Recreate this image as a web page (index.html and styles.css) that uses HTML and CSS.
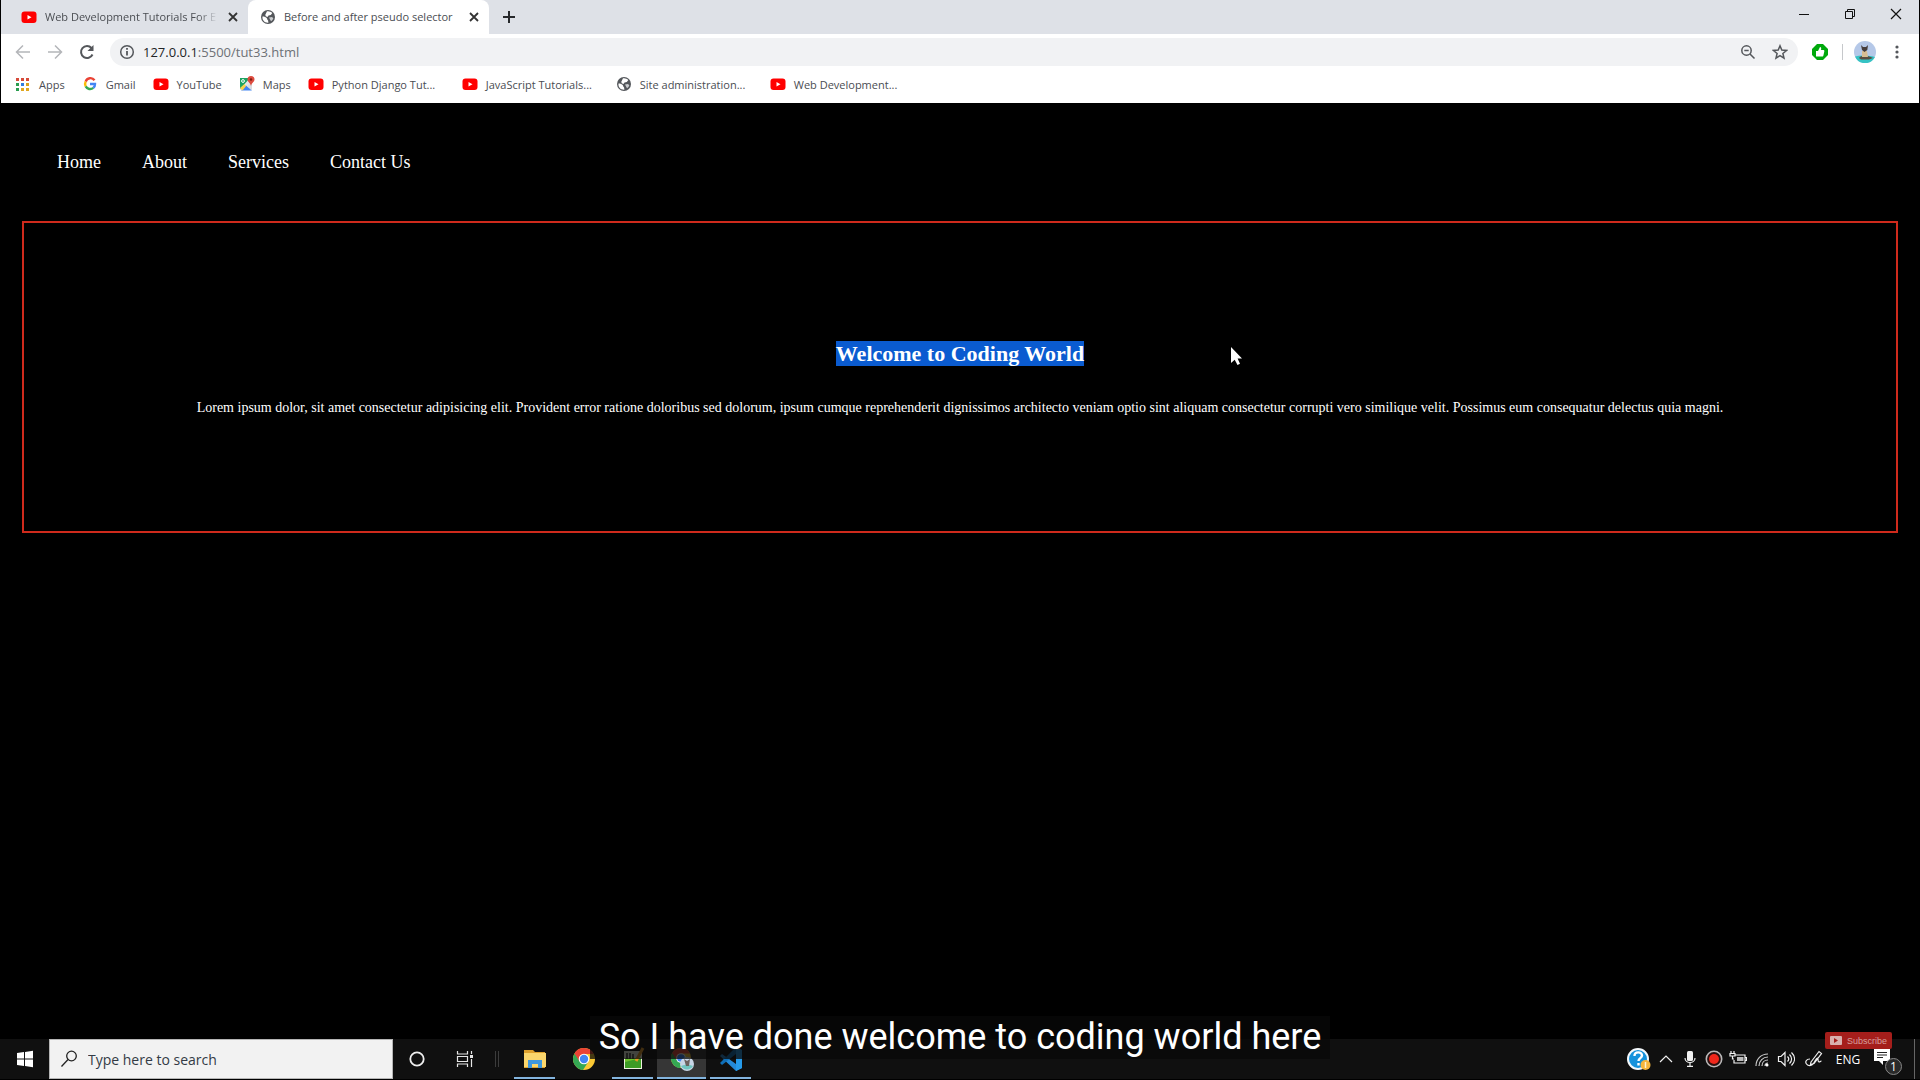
FILE: index.html
```html
<!DOCTYPE html>
<html lang="en">
<head>
<meta charset="utf-8">
<title>Before and after pseudo selector</title>
<link rel="stylesheet" href="styles.css">
</head>
<body>
<svg class="sprite" aria-hidden="true">
  <symbol id="youtube" viewBox="0 0 16 16"><rect x="0.500" y="2.500" width="15" height="11.500" rx="3" fill="#f00"/><path d="M6.500 6v4.500l4-2.250z" fill="#fff"/></symbol>
  <symbol id="globe" viewBox="0 0 16 16"><circle cx="8" cy="8" r="7" fill="#54575b"/><path d="M2.500 7.500c2 0 3.500.5 4.200 1.600.8 1 .2 1.800 1.400 2.300l.3 2.300C4.500 14 2 11 2.500 7.500zM7 2.300c2-.4 4 .4 5.300 1.700l-1.500 2-2.300.5-1 1.500-1.800-.8-.4-1.500z" fill="#fff"/><path d="M9 8.500l3-.5 1.300 1.300c-.4 1.200-1.300 2.300-2.300 3z" fill="#c9cbce"/></symbol>
  <symbol id="cross" viewBox="0 0 10 10"><path d="M1 1l8 8M9 1l-8 8" fill="none" stroke="currentColor" stroke-width="1.800"/></symbol>
  <symbol id="chrome" viewBox="0 0 24 24"><circle cx="12" cy="12" r="11" fill="#fcc934"/><path d="M12 12L2.500 6.500A11 11 0 0 0 11 23l5.500-8.500z" fill="#34a853"/><path d="M2.500 6.500A11 11 0 0 1 21.700 7H12l-4.500 7.500z" fill="#ea4335"/><circle cx="12" cy="12" r="5.300" fill="#fff"/><circle cx="12" cy="12" r="4.200" fill="#4285f4"/></symbol>
</svg>

<header class="browser">
  <div class="tabs">
    <div class="tab">
      <svg class="icon16"><use href="#youtube"/></svg>
      <span class="tab-title faded">Web Development Tutorials For E</span>
      <button class="tab-close" aria-label="Close tab"><svg class="icon10"><use href="#cross"/></svg></button>
    </div>
    <div class="tab active">
      <svg class="icon16"><use href="#globe"/></svg>
      <span class="tab-title">Before and after pseudo selector</span>
      <button class="tab-close" aria-label="Close tab"><svg class="icon10"><use href="#cross"/></svg></button>
    </div>
    <button class="new-tab" aria-label="New tab"><svg width="12" height="12" viewBox="0 0 12 12"><path d="M6 0v12M0 6h12" stroke="#27292c" stroke-width="2"/></svg></button>
    <div class="window-buttons">
      <button aria-label="Minimise"><svg width="12" height="12" viewBox="0 0 12 12"><path d="M1 6.500h10" stroke="#111"/></svg></button>
      <button aria-label="Restore"><svg width="12" height="12" viewBox="0 0 12 12" fill="none" stroke="#111"><path d="M1.500 3.500h7v7h-7zM3.500 3.500v-2h7v7h-2"/></svg></button>
      <button aria-label="Close"><svg width="12" height="12" viewBox="0 0 12 12"><path d="M1 1l10 10M11 1L1 11" stroke="#111" stroke-width="1.200"/></svg></button>
    </div>
  </div>

  <div class="toolbar">
    <button class="tool dim" aria-label="Back"><svg class="icon16" viewBox="0 0 16 16"><path d="M15 8H2M8 1.500L1.500 8 8 14.500"/></svg></button>
    <button class="tool dim" aria-label="Forward"><svg class="icon16" viewBox="0 0 16 16"><path d="M1 8h13M8 1.500L14.500 8 8 14.500"/></svg></button>
    <button class="tool" aria-label="Reload"><svg class="icon16" viewBox="0 0 16 16"><path d="M13.500 10.500A6 6 0 1 1 12.500 4l1 1.200" stroke-width="2"/><path d="M14.500 1v6h-6z" fill="#54575b" stroke="none"/></svg></button>
    <form class="address">
      <svg class="icon16 line" viewBox="0 0 16 16"><circle cx="8" cy="8" r="6.300"/><path d="M8 7v4.500M8 4v1.800" stroke-width="1.800"/></svg>
      <label class="url"><span class="host">127.0.0.1</span>:5500/tut33.html<input aria-label="Address" class="url-input"></label>
      <button type="button" class="tool" aria-label="Zoom"><svg class="icon16" viewBox="0 0 16 16"><circle cx="6.500" cy="6.500" r="4.700"/><path d="M4.300 6.500h4.400M10 10l4.500 4.500"/></svg></button>
      <button type="button" class="tool" aria-label="Bookmark"><svg class="icon16" viewBox="0 0 16 16"><path d="M8 1.800l1.800 4.300 4.700.4-3.600 3 1.100 4.600-4-2.500-4 2.500 1.100-4.600-3.600-3 4.700-.4z"/></svg></button>
    </form>
    <button class="tool extension" aria-label="Extension"><svg class="icon16" viewBox="0 0 16 16"><path d="M5 0h6l5 5v6l-5 5H5l-5-5V5z" fill="#00a90c" stroke="none"/><path d="M4 7h2l2-4c1.200 0 1.500 1 1 3h2.500c1 0 1 1 .7 2l-.7 3c-.2 1-.5 1.500-1.500 1.500H4z" fill="#fff" stroke="none"/></svg></button>
    <span class="divider"></span>
    <button class="tool profile" aria-label="Profile"><svg class="icon22" viewBox="0 0 22 22"><g stroke="none"><circle cx="11" cy="11" r="11" fill="#b5c8e8"/><path d="M1 15.500c6-1.500 14-1 20 .5a11 11 0 0 1-20-.5z" fill="#35c3c4"/><path d="M5 17c2-3 8-3 14 0l-4 1.500H7z" fill="#5b4c40"/><path d="M8 10h5l1 6H8z" fill="#d8bd93"/><path d="M7 4l2 2h3l2-2-.7 5-2.800 2L8 9z" fill="#463d3b"/></g></svg></button>
    <button class="tool menu" aria-label="Menu"><svg class="icon16" viewBox="0 0 16 16"><g fill="#54575b" stroke="none"><circle cx="8" cy="3" r="1.600"/><circle cx="8" cy="8" r="1.600"/><circle cx="8" cy="13" r="1.600"/></g></svg></button>
  </div>

  <nav class="bookmarks" aria-label="Bookmarks">
    <a href="#"><svg class="icon16" viewBox="0 0 16 16"><path d="M1 2h3v3H1zM6 2h3v3H6zM11 2h3v3h-3z" fill="#d64a3a"/><path d="M1 7h3v3H1z" fill="#2a9d50"/><path d="M6 7h3v3H6z" fill="#2f7de1"/><path d="M11 7h3v3h-3z" fill="#d8a01d"/><path d="M1 12h3v3H1z" fill="#2a9d50"/><path d="M6 12h3v3H6zM11 12h3v3h-3z" fill="#e0a71f"/></svg>Apps</a>
    <a href="#"><svg class="icon16" viewBox="0 0 16 16" fill="none" stroke-width="2.400"><path d="M12.500 4.200A5 5 0 0 0 3.700 5.600" stroke="#ea4335"/><path d="M3.700 5.600a5 5 0 0 0 0 4.800" stroke="#fbbc05"/><path d="M3.700 10.400a5 5 0 0 0 7.600 1.500" stroke="#34a853"/><path d="M11.300 11.900A5 5 0 0 0 13 8H8" stroke="#4285f4"/></svg>Gmail</a>
    <a href="#"><svg class="icon16"><use href="#youtube"/></svg>YouTube</a>
    <a href="#"><svg class="icon16" viewBox="0 0 16 16"><path d="M1 2h12v12H1z" fill="#e4e6e8"/><path d="M1 2h10L1 13z" fill="#1da462"/><path d="M2 14.500l5-5 6 5z" fill="#4285f4"/><path d="M1 12l2.500 2.500L7 10 5.500 8z" fill="#fbd14b"/><path d="M8 10l5 4.500V6z" fill="#dadce0"/><path d="M12 0a3.500 3.500 0 0 1 3.500 3.500C15.500 6 12.500 7 12 10c-.5-3-3.500-4-3.500-6.500A3.500 3.500 0 0 1 12 0z" fill="#dd4b3e"/><circle cx="12" cy="3.500" r="1.200" fill="#7d1c14"/><circle cx="4" cy="5" r="1.400" fill="none" stroke="#fff"/></svg>Maps</a>
    <a class="long" href="#"><svg class="icon16"><use href="#youtube"/></svg>Python Django Tut...</a>
    <a class="long" href="#"><svg class="icon16"><use href="#youtube"/></svg>JavaScript Tutorials...</a>
    <a class="long" href="#"><svg class="icon16"><use href="#globe"/></svg>Site administration...</a>
    <a class="long" href="#"><svg class="icon16"><use href="#youtube"/></svg>Web Development...</a>
  </nav>
</header>

<main class="page">
  <nav class="site-nav">
    <a href="#">Home</a>
    <a href="#">About</a>
    <a href="#">Services</a>
    <a href="#">Contact Us</a>
  </nav>
  <section class="welcome">
    <h1><span class="selected">Welcome to Coding World</span></h1>
    <p>Lorem ipsum dolor, sit amet consectetur adipisicing elit. Provident error ratione doloribus sed dolorum, ipsum cumque reprehenderit dignissimos architecto veniam optio sint aliquam consectetur corrupti vero similique velit. Possimus eum consequatur delectus quia magni.</p>
    <svg class="cursor" width="14" height="20" viewBox="0 0 14 20" aria-hidden="true"><path d="M1 0v16l3.700-3.300L7.500 18l2.500-1.200L7.600 11.500H12z" fill="#fff"/></svg>
  </section>
</main>

<footer class="taskbar">
  <button class="start" aria-label="Start"><svg width="18" height="18" viewBox="0 0 18 18"><path d="M1 3l7-1v6.500H1zM9 1.900L17 .8v7.700H9zM1 9.500h7V16l-7-1zM9 9.500h8v7.700l-8-1.100z" fill="#fff"/></svg></button>
  <label class="search">
    <svg class="icon18" viewBox="0 0 18 18" fill="none" stroke="#222" stroke-width="1.300"><circle cx="11.500" cy="6" r="4.800"/><path d="M8 9.500L1.500 16.500"/></svg>
    <input type="text" placeholder="Type here to search" aria-label="Search">
  </label>
  <button class="task" aria-label="Cortana"><svg width="18" height="18" viewBox="0 0 18 18"><circle cx="9" cy="9" r="6.700" fill="none" stroke="#eee" stroke-width="1.800"/></svg></button>
  <button class="task" aria-label="Task view"><svg width="18" height="18" viewBox="0 0 18 18" fill="none" stroke="#e6e6e6" stroke-width="1.200"><path d="M1.500 1v3h10V1M1.500 17v-3h10v3M1.500 6.500h10v5h-10zM15.500 1v3M15.500 9v8"/><path d="M14 5h3v3h-3z" fill="#e6e6e6" stroke="none"/></svg></button>
  <span class="grip"></span>
  <button class="app open" aria-label="File Explorer"><svg width="24" height="24" viewBox="0 0 24 24"><path d="M1 3h9l2 2h10v16H1z" fill="#dfa12c"/><path d="M1 6h22v14H1z" fill="#fbd66c"/><path d="M5 13h14v8h-4v-4H9v4H5z" fill="#3f97dd"/></svg></button>
  <button class="app" aria-label="Chrome"><svg width="24" height="24"><use href="#chrome"/></svg></button>
  <button class="app open" aria-label="Text editor"><svg width="24" height="24" viewBox="0 0 24 24"><path d="M3 4h18v18H3z" fill="#eef1df"/><path d="M4 11h16v10H4z" fill="#6fc22f"/><path d="M4 15l16-4v10H4z" fill="#3d9c24"/><path d="M6 6v6M9 6v6M12 7v5" stroke="#333" stroke-width="1.500"/><path d="M22 1l-7 13" stroke="#e89a24" stroke-width="3"/></svg></button>
  <button class="app current" aria-label="Chrome, second window"><svg width="24" height="24" viewBox="0 0 24 24"><use href="#chrome" width="22" height="22"/><circle cx="17" cy="17" r="7" fill="#c8d6e6"/><path d="M11 19c4-2 8-2 12 0a7 7 0 0 1-12 0z" fill="#70c6c0"/><path d="M14 12l3 2 3-2-1 7h-3z" fill="#6c625e"/></svg></button>
  <button class="app open" aria-label="Visual Studio Code"><svg width="24" height="24" viewBox="0 0 24 24"><path d="M17 0l6 3v18l-6 3L1 9l2-2 14 10z" fill="#2489d8"/><path d="M17 0v7L3 18l-2-2z" fill="#0f6fb8"/><path d="M17 0l6 3v18l-6 3z" fill="#269bea"/></svg></button>

  <div class="tray">
    <button class="slot help" aria-label="Help"><svg width="24" height="24" viewBox="0 0 24 24"><circle cx="11" cy="12" r="10" fill="#1592dc" stroke="#f4f8fb" stroke-width="2"/><path d="M7.500 9c0-5 7.500-4.500 7.500-.5 0 2.700-3.500 2.500-3.500 5.500M11.500 16v2.500" fill="none" stroke="#fff" stroke-width="2.400"/><circle cx="18.500" cy="18" r="5" fill="#f6b63c"/><path d="M18.500 15v6" stroke="#fff3cf" stroke-width="1.500"/></svg></button>
    <button class="slot" aria-label="Show hidden icons"><svg class="icon16" viewBox="0 0 16 16"><path d="M2 11l6-6 6 6"/></svg></button>
    <button class="slot" aria-label="Microphone"><svg class="icon16" viewBox="0 0 16 16"><rect x="5" y="0" width="6" height="10" rx="1.500" fill="#f1f1f1" stroke="none"/><path d="M3 7c0 6 10 6 10 0M8 12v3M5 15.300h6"/></svg></button>
    <button class="slot" aria-label="Recorder"><svg class="icon18" viewBox="0 0 18 18"><circle cx="9" cy="9" r="7.700" fill="#2b1010" stroke="#b9b9b9" stroke-width="1.600"/><circle cx="9" cy="9" r="5" fill="#f0271b" stroke="none"/></svg></button>
    <button class="slot" aria-label="Battery"><svg class="icon18" viewBox="0 0 18 18"><path d="M6 5h10v8H5v-3M16 7.500h1.500v3H16M2 1v2M5 1v2M1 3.500h5v2.500H1zM3.500 6v3H5"/><path d="M8 7h6.500v4H8z" fill="#bbb" stroke="none"/></svg></button>
    <button class="slot" aria-label="Network"><svg class="icon16" viewBox="0 0 16 16"><path d="M2 15C2 8 7 3 14 3M5 15c0-5 4-9 9-9M8 15c0-3.500 2.500-6 6-6M11 15c0-2 1-3 3-3" stroke="#c8c8c8"/><circle cx="13" cy="14" r="1.500" fill="#fff" stroke="none"/></svg></button>
    <button class="slot" aria-label="Volume"><svg class="icon18" viewBox="0 0 18 18"><path d="M1.500 6.500h2.500L8 2.500v13L4 11.500H1.500zM10.500 6.500c1.500 1.500 1.500 3.500 0 5M12.500 4.500c2.800 2.700 2.800 6.300 0 9M14.500 2.500c4 4 4 9 0 13"/></svg></button>
    <button class="slot pen" aria-label="Ink workspace"><svg class="icon18" viewBox="0 0 18 18"><path d="M6 12L14 1.500l2.500 2L9 13.500l-3.500 1zM5 9C1 9 0 12 1.500 14s5 2.500 7-.5 3-6 4-5.500 0 4 1.500 4 1-1 2.500-1"/></svg></button>
    <button class="slot lang">ENG</button>
    <button class="slot notices" aria-label="Notifications"><svg width="26" height="26" viewBox="0 0 26 26"><path d="M1 3h16v12h-7v4l-4-4H1z" fill="#fff" stroke="none"/><path d="M4 6.500h10M4 9h10M4 11.500h6" stroke="#222"/></svg><span class="count">1</span></button>
    <span class="desktop-edge"></span>
  </div>

  <a class="subscribe" href="#"><svg width="12" height="9" viewBox="0 0 12 9"><rect width="12" height="9" rx="1" fill="#d8b0ae"/><path d="M4 2v5l4-2.500z" fill="#a51e1b"/></svg>Subscribe</a>
  <div class="caption-row"><p class="caption">So I have done welcome to coding world here</p></div>
</footer>
</body>
</html>
```
FILE: styles.css
```css
* {
  box-sizing: border-box;
}

body {
  margin: 0;
  min-height: 100vh;
  display: flex;
  flex-direction: column;
  background: #000;
  font-family: "Open Sans", "Noto Sans", sans-serif;
  font-size: 11px;
}

button {
  border: 0;
  padding: 0;
  background: none;
  font: inherit;
  color: inherit;
  display: flex;
  align-items: center;
  justify-content: center;
}

a {
  color: inherit;
  text-decoration: none;
}

svg {
  flex: none;
}

.sprite {
  position: absolute;
  width: 0;
  height: 0;
}

.icon10 { width: 10px; height: 10px; }
.icon16 { width: 16px; height: 16px; }
.icon18 { width: 18px; height: 18px; }
.icon22 { width: 22px; height: 22px; }

/* Browser window */
.browser {
  margin: 0 1px;
  background: #fff;
  color: #4a4d52;
}

.tabs {
  display: flex;
  height: 34px;
  background: #dee1e7;
}

.tab {
  display: flex;
  align-items: center;
  width: 247px;
  padding: 0 8px 1px 20px;
  gap: 8px;
}

.tab.active {
  width: 241px;
  padding-left: 12px;
  background: #fff;
  border-radius: 8px 8px 0 0;
}

.tab-title {
  flex: 1;
  white-space: nowrap;
}

.faded {
  mask-image: linear-gradient(to right, #000 88%, transparent);
}

.tab-close {
  width: 14px;
  height: 16px;
  color: #333;
}

.new-tab {
  width: 40px;
}

.window-buttons {
  display: flex;
  height: 28px;
  margin-left: auto;
}

.window-buttons button {
  width: 46px;
}

.toolbar {
  display: flex;
  align-items: center;
  height: 35px;
  padding: 0 6px;
}

.tool {
  width: 32px;
  height: 28px;
}

.tool svg,
.line {
  fill: none;
  stroke: #54575b;
  stroke-width: 1.5px;
}

.tool.dim svg {
  stroke: #b4b6b9;
}

.address {
  flex: 1;
  display: flex;
  align-items: center;
  height: 28px;
  margin-left: 7px;
  padding: 0 2px 0 9px;
  border-radius: 14px;
  background: #f1f2f4;
}

.url {
  flex: 1;
  display: flex;
  margin-left: 8px;
  font-size: 13px;
  color: #6d7176;
}

.host {
  color: #222427;
}

.url-input {
  flex: 1;
  border: 0;
  padding: 0;
  background: none;
}

.extension {
  margin-left: 6px;
}

.divider {
  width: 1px;
  height: 16px;
  margin: 0 6px;
  background: #c6c8cb;
}

.bookmarks {
  display: flex;
  align-items: center;
  height: 34px;
  padding: 0 14px 4px;
  gap: 17px;
}

.bookmarks a {
  display: flex;
  align-items: center;
  gap: 8px;
}

.bookmarks .long {
  min-width: 137px;
}

/* Page being shown */
.page {
  flex: 1;
  padding: 0 22px;
  color: #fff;
  font-family: "Liberation Serif", serif;
}

.site-nav {
  display: flex;
  gap: 41px;
  padding: 49px 35px 48px;
  font-size: 18px;
  line-height: 21px;
}

.welcome {
  position: relative;
  height: 312px;
  display: flex;
  flex-direction: column;
  justify-content: center;
  align-items: center;
  gap: 33px;
  padding-top: 3px;
  border: 2px solid #cf2a1c;
  text-align: center;
}

.welcome h1 {
  margin: 0;
  font-size: 22px;
  line-height: 25px;
}

.selected {
  background: #0a5bd0;
}

.welcome p {
  margin: 0;
  font-size: 14px;
  line-height: 18px;
}

.cursor {
  position: absolute;
  left: 1206px;
  top: 124px;
}

/* Taskbar */
.taskbar {
  position: relative;
  display: flex;
  height: 41px;
  padding: 0 1px;
  border-bottom: 1px solid #000;
  background: #101010;
  color: #fff;
}

.start,
.task {
  width: 48px;
}

.search {
  display: flex;
  align-items: center;
  width: 344px;
  padding-left: 10px;
  gap: 10px;
  border: 1px solid #b5b5b5;
  background: #f2f2f2;
}

.search input {
  flex: 1;
  border: 0;
  padding: 0;
  background: none;
  font: 14px "Open Sans", "Noto Sans", sans-serif;
}

.search input::placeholder {
  color: #333b45;
}

.grip {
  width: 4px;
  height: 16px;
  margin: 12px 11px 0 6px;
  border: solid #3c3c3c;
  border-width: 0 1px;
}

.app {
  width: 49px;
  padding-top: 2px;
  border-bottom: 2px solid transparent;
}

.app.open {
  width: 41px;
  margin: 0 4px;
  border-bottom-color: #83b4de;
}

.app.current {
  border-bottom-color: #83b4de;
  background: #363636;
}

.tray {
  display: flex;
  margin-left: auto;
}

.slot {
  width: 24px;
}

.slot svg {
  stroke: #f1f1f1;
  stroke-width: 1.2px;
  fill: none;
}

.slot.help { width: 30px; }
.slot.help svg { stroke: none; }
.slot.pen { width: 32px; }

.slot.lang {
  width: 36px;
  font-size: 12px;
}

.slot.notices {
  position: relative;
  width: 40px;
}

.count {
  position: absolute;
  right: 4px;
  bottom: 4px;
  width: 17px;
  height: 17px;
  border: 1px solid #888;
  border-radius: 50%;
  background: #2a2a2a;
  font-size: 12px;
  line-height: 15px;
}

.desktop-edge {
  width: 5px;
  margin-left: 8px;
  border-left: 1px solid #666;
}

/* Video overlays */
.subscribe {
  position: absolute;
  right: 28px;
  bottom: 30px;
  display: flex;
  align-items: center;
  gap: 5px;
  height: 17px;
  padding: 0 5px;
  border-radius: 2px;
  background: #a51e1b;
  color: #d8a09e;
  font-family: "Liberation Sans", sans-serif;
  font-size: 9px;
}

.caption-row {
  position: absolute;
  inset: auto 0 20px;
  display: flex;
  justify-content: center;
  pointer-events: none;
}

.caption {
  margin: 0;
  padding: 0 9px;
  background: rgba(8, 8, 8, 0.75);
  font-family: Roboto, sans-serif;
  font-size: 36px;
  line-height: 43px;
}
```
